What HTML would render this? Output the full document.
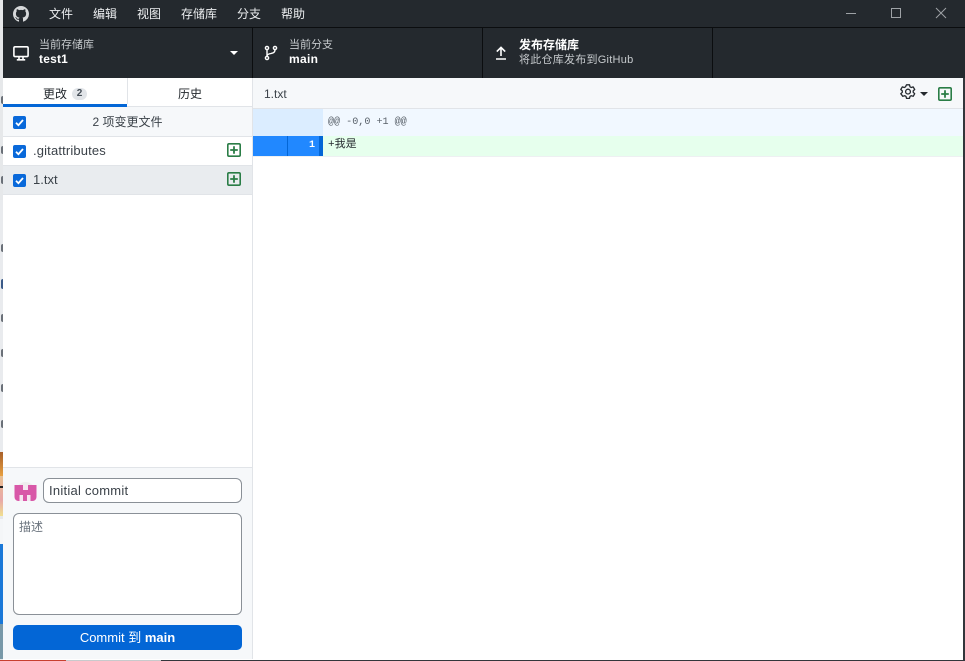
<!DOCTYPE html>
<html lang="zh">
<head>
<meta charset="utf-8">
<title>GitHub Desktop</title>
<style>
html,body{margin:0;padding:0;width:965px;height:661px;overflow:hidden;background:#fff}
body{position:relative;font-family:"Liberation Sans","Noto Sans CJK SC",sans-serif;font-size:12px;color:#24292e}
.a{position:absolute;white-space:nowrap}
.cb{position:absolute;left:13px;width:13px;height:13px;background:#0969da;border-radius:2px}
.cb svg{display:block}
.add{position:absolute;left:227px;width:14px;height:14px}
.m{position:absolute;left:1px;width:2px;height:8px;background:#6a7078;border-radius:4px 0 0 4px}
.mono{font-family:"Liberation Mono","Noto Sans CJK SC",monospace;font-size:10.1px;line-height:15px}
</style>
</head>
<body>
<!-- left desktop sliver -->
<div class="a" style="left:0;top:0;width:3px;height:661px;background:#e6e8ea"></div>
<div class="a" style="left:0;top:200px;width:3px;height:252px;background:#e9ebee"></div>
<div class="m" style="top:96px"></div>
<div class="m" style="top:146px"></div>
<div class="m" style="top:176px"></div>
<div class="m" style="top:244px"></div>
<div class="m" style="top:279px;background:#3a5a88;height:10px"></div>
<div class="m" style="top:314px"></div>
<div class="m" style="top:349px"></div>
<div class="m" style="top:384px"></div>
<div class="m" style="top:420px"></div>
<div class="a" style="left:0;top:452px;width:3px;height:24px;background:linear-gradient(#a8602a,#e8a040)"></div>
<div class="a" style="left:0;top:476px;width:3px;height:40px;background:linear-gradient(#e8c090,#e8a8a8 60%,#f0e090)"></div>
<div class="a" style="left:0;top:486px;width:3px;height:2px;background:#222"></div>
<div class="a" style="left:0;top:519px;width:3px;height:25px;background:#f4f6f8"></div>
<div class="a" style="left:0;top:544px;width:3px;height:80px;background:#1a78d8"></div>
<div class="a" style="left:0;top:624px;width:3px;height:35px;background:#7898a8"></div>

<!-- title bar -->
<div class="a" style="left:3px;top:0;width:962px;height:27px;background:#24292e"></div>
<div class="a" style="left:3px;top:27px;width:962px;height:1px;background:#0b0d0f"></div>
<svg class="a" style="left:13px;top:6px" width="16" height="16" viewBox="0 0 16 16"><path fill="#d6d8da" d="M8 0C3.58 0 0 3.58 0 8c0 3.54 2.29 6.53 5.47 7.59.4.07.55-.17.55-.38 0-.19-.01-.82-.01-1.49-2.01.37-2.53-.49-2.69-.94-.09-.23-.48-.94-.82-1.13-.28-.15-.68-.52-.01-.53.63-.01 1.08.58 1.23.82.72 1.21 1.87.87 2.33.66.07-.52.28-.87.51-1.07-1.78-.2-3.64-.89-3.64-3.95 0-.87.31-1.59.82-2.15-.08-.2-.36-1.02.08-2.12 0 0 .67-.21 2.2.82.64-.18 1.32-.27 2-.27s1.36.09 2 .27c1.53-1.04 2.2-.82 2.2-.82.44 1.1.16 1.92.08 2.12.51.56.82 1.27.82 2.15 0 3.07-1.87 3.75-3.65 3.95.29.25.54.73.54 1.48 0 1.07-.01 1.93-.01 2.2 0 .21.15.46.55.38A8.01 8.01 0 0 0 16 8c0-4.42-3.58-8-8-8z"/></svg>
<div class="a" style="left:49px;top:6px;color:#eceef0;line-height:16px">文件</div>
<div class="a" style="left:93px;top:6px;color:#eceef0;line-height:16px">编辑</div>
<div class="a" style="left:137px;top:6px;color:#eceef0;line-height:16px">视图</div>
<div class="a" style="left:181px;top:6px;color:#eceef0;line-height:16px">存储库</div>
<div class="a" style="left:237px;top:6px;color:#eceef0;line-height:16px">分支</div>
<div class="a" style="left:281px;top:6px;color:#eceef0;line-height:16px">帮助</div>
<svg class="a" style="left:840px;top:3px" width="120" height="20" viewBox="0 0 120 20" fill="none" stroke="#9ea2a6" stroke-width="1">
<path d="M6 10.5h10"/><rect x="51.5" y="5.5" width="9" height="9"/><path d="M96 5l10 10M106 5l-10 10"/></svg>

<!-- toolbar -->
<div class="a" style="left:3px;top:28px;width:962px;height:50px;background:#24292e"></div>
<div class="a" style="left:252px;top:28px;width:1px;height:50px;background:#0b0d0f"></div>
<div class="a" style="left:482px;top:28px;width:1px;height:50px;background:#0b0d0f"></div>
<div class="a" style="left:712px;top:28px;width:1px;height:50px;background:#0b0d0f"></div>
<svg class="a" style="left:13px;top:46px" width="16" height="16" viewBox="0 0 16 16" fill="none" stroke="#fff" stroke-width="1.6"><rect x=".9" y=".8" width="14.200" height="9.800" rx="1.200"/><path d="M6 10.800v2.600M10 10.800v2.600M3.800 13.800h8.400"/></svg>
<div class="a" style="left:39px;top:38px;font-size:11px;line-height:14px;color:#c6cacd">当前存储库</div>
<div class="a" style="left:39px;top:52px;font-size:12px;line-height:15px;font-weight:bold;color:#fff;letter-spacing:.2px">test1</div>
<div class="a" style="left:230px;top:51px;width:0;height:0;border-left:4.5px solid transparent;border-right:4.5px solid transparent;border-top:4.5px solid #fff"></div>
<svg class="a" style="left:263px;top:45px" width="16" height="16" viewBox="0 0 16 16" fill="none" stroke="#fff" stroke-width="1.4"><circle cx="4" cy="3" r="1.6"/><circle cx="4" cy="13" r="1.6"/><circle cx="12" cy="3" r="1.6"/><path d="M4 4.600v6.800M12 4.600c0 3-2 3.400-4 3.900-2 .4-4 .8-4 2.900"/></svg>
<div class="a" style="left:289px;top:38px;font-size:11px;line-height:14px;color:#c6cacd">当前分支</div>
<div class="a" style="left:289px;top:52px;font-size:12px;line-height:15px;font-weight:bold;color:#fff;letter-spacing:.3px">main</div>
<svg class="a" style="left:493px;top:45px" width="16" height="16" viewBox="0 0 16 16" fill="none" stroke="#fff" stroke-width="1.6"><path d="M8 11V2.500M3.800 6.600L8 2.400l4.200 4.200M3 14h10"/></svg>
<div class="a" style="left:519px;top:38px;font-size:12px;line-height:15px;font-weight:bold;color:#fff">发布存储库</div>
<div class="a" style="left:519px;top:53px;font-size:11px;line-height:14px;color:#c6cacd;letter-spacing:.25px">将此仓库发布到GitHub</div>

<!-- sidebar -->
<div class="a" style="left:3px;top:78px;width:249px;height:581px;background:#fff"></div>
<div class="a" style="left:252px;top:78px;width:1px;height:581px;background:#e1e4e8"></div>
<div class="a" style="left:127px;top:78px;width:1px;height:26px;background:#e1e4e8"></div>
<div class="a" style="left:3px;top:104px;width:124px;height:3px;background:#0366d6"></div>
<div class="a" style="left:127px;top:106px;width:125px;height:1px;background:#e1e4e8"></div>
<div class="a" style="left:43px;top:86px;line-height:16px">更改</div>
<div class="a" style="left:72px;top:88px;width:15px;height:12px;border-radius:6px;background:#e1e4e8;text-align:center;font-size:10px;line-height:12px;font-weight:bold;color:#444d56">2</div>
<div class="a" style="left:178px;top:86px;line-height:16px">历史</div>

<div class="a" style="left:3px;top:107px;width:249px;height:29px;background:#f6f8fa"></div>
<div class="a" style="left:3px;top:136px;width:249px;height:1px;background:#e1e4e8"></div>
<div class="a" style="left:3px;top:114px;width:249px;text-align:center;line-height:16px;color:#3b4249">2 项变更文件</div>

<div class="a" style="left:3px;top:165px;width:249px;height:1px;background:#e1e4e8"></div>
<div class="a" style="left:3px;top:166px;width:249px;height:28px;background:#e9ecef"></div>
<div class="a" style="left:3px;top:194px;width:249px;height:1px;background:#e1e4e8"></div>
<div class="a" style="left:33px;top:143px;font-size:13px;line-height:16px;color:#3b4249;letter-spacing:.15px">.gitattributes</div>
<div class="a" style="left:33px;top:172px;font-size:13px;line-height:16px;color:#3b4249">1.txt</div>

<div class="cb" style="top:116px"><svg width="13" height="13" viewBox="0 0 13 13"><path d="M3 6.800l2.400 2.400L10 4" fill="none" stroke="#fff" stroke-width="1.800"/></svg></div>
<div class="cb" style="top:145px"><svg width="13" height="13" viewBox="0 0 13 13"><path d="M3 6.800l2.400 2.400L10 4" fill="none" stroke="#fff" stroke-width="1.800"/></svg></div>
<div class="cb" style="top:174px"><svg width="13" height="13" viewBox="0 0 13 13"><path d="M3 6.800l2.400 2.400L10 4" fill="none" stroke="#fff" stroke-width="1.800"/></svg></div>
<svg class="add" style="top:143px" viewBox="0 0 14 14" fill="none" stroke="#2a7d46" stroke-width="1.600"><rect x=".8" y=".8" width="12.400" height="12.400" rx="1.200"/><path d="M7 3.200v7.600M3.200 7h7.600" stroke-width="1.800"/></svg>
<svg class="add" style="top:172px" viewBox="0 0 14 14" fill="none" stroke="#2a7d46" stroke-width="1.600"><rect x=".8" y=".8" width="12.400" height="12.400" rx="1.200"/><path d="M7 3.200v7.600M3.200 7h7.600" stroke-width="1.800"/></svg>

<!-- commit area -->
<div class="a" style="left:3px;top:467px;width:249px;height:192px;background:#f6f8fa"></div>
<div class="a" style="left:3px;top:467px;width:249px;height:1px;background:#e1e4e8"></div>
<svg class="a" style="left:14px;top:482px" width="23" height="20" viewBox="0 0 23 20">
<circle cx="11.500" cy="9.500" r="9.500" fill="#eeecee"/>
<path d="M.5 3H22.500V15a4 4 0 0 1-4 4H4.500a4 4 0 0 1-4-4z" fill="#d858a8"/>
<rect x="9" y="3" width="5" height="5" fill="#f5e6f0"/>
<rect x="5.500" y="13" width="3.500" height="6" fill="#f5e6f0"/>
<rect x="13" y="13" width="3.500" height="6" fill="#f5e6f0"/>
</svg>
<div class="a" style="left:43px;top:478px;width:197px;height:23px;background:#fff;border:1px solid #8a9097;border-radius:6px;font-size:13px;line-height:23px;text-indent:5px;color:#3b4249;letter-spacing:.25px">Initial commit</div>
<div class="a" style="left:13px;top:513px;width:227px;height:100px;background:#fff;border:1px solid #8a9097;border-radius:6px"></div>
<div class="a" style="left:19px;top:519px;line-height:16px;color:#6a737d">描述</div>
<div class="a" style="left:13px;top:625px;width:229px;height:25px;background:#0366d6;border-radius:5px;color:#fff;text-align:center;font-size:13px;line-height:25px">Commit 到 <b>main</b></div>

<!-- diff header -->
<div class="a" style="left:253px;top:78px;width:712px;height:30px;background:#f6f8fa"></div>
<div class="a" style="left:253px;top:108px;width:712px;height:1px;background:#e1e4e8"></div>
<div class="a" style="left:264px;top:86px;line-height:16px;color:#3b4249">1.txt</div>
<svg class="a" style="left:900px;top:84px" width="16" height="16" viewBox="0 0 16 16" fill="none" stroke="#24292e" stroke-width="1.300" stroke-linejoin="round"><path d="M6.500.8h3l.5 2 1.200.7 2-.6 1.500 2.600-1.500 1.400v1.400l1.500 1.400-1.500 2.600-2-.6-1.200.7-.5 2h-3l-.5-2-1.200-.7-2 .6L.8 9.700l1.500-1.400V6.900L.8 5.500l1.500-2.600 2 .6 1.200-.7z"/><circle cx="8" cy="7.600" r="2.400"/></svg>
<div class="a" style="left:920px;top:92px;width:0;height:0;border-left:4px solid transparent;border-right:4px solid transparent;border-top:4px solid #24292e"></div>
<svg class="a" style="left:938px;top:87px" width="14" height="14" viewBox="0 0 14 14" fill="none" stroke="#2a7d46" stroke-width="1.600"><rect x=".8" y=".8" width="12.400" height="12.400" rx="1.200"/><path d="M7 3.200v7.600M3.200 7h7.600" stroke-width="1.800"/></svg>

<!-- diff body -->
<div class="a" style="left:253px;top:109px;width:70px;height:27px;background:#dbedff"></div>
<div class="a" style="left:323px;top:109px;width:642px;height:27px;background:#f1f8ff"></div>
<div class="a mono" style="left:328px;top:115px;color:#586069">@@ -0,0 +1 @@</div>
<div class="a" style="left:253px;top:136px;width:70px;height:20px;background:#2188ff"></div>
<div class="a" style="left:287px;top:136px;width:1px;height:20px;background:#0366d6"></div>
<div class="a" style="left:319px;top:136px;width:4px;height:20px;background:#0366d6"></div>
<div class="a" style="left:323px;top:136px;width:642px;height:20px;background:#e6ffed"></div>
<div class="a" style="left:253px;top:156px;width:712px;height:1px;background:#eef0f2"></div>
<div class="a mono" style="left:300px;top:138px;width:15px;text-align:right;color:#fff;font-weight:bold">1</div>
<div class="a mono" style="left:328px;top:138px;color:#24292e;font-size:11px">+我是</div>

<!-- window edges -->
<div class="a" style="left:963px;top:78px;width:2px;height:583px;background:#33363b"></div>
<div class="a" style="left:3px;top:660px;width:962px;height:1px;background:#c8cacc"></div>
<div class="a" style="left:0;top:660px;width:66px;height:1px;background:#c84030"></div>
<div class="a" style="left:161px;top:660px;width:804px;height:1px;background:#33363b"></div>
</body>
</html>
